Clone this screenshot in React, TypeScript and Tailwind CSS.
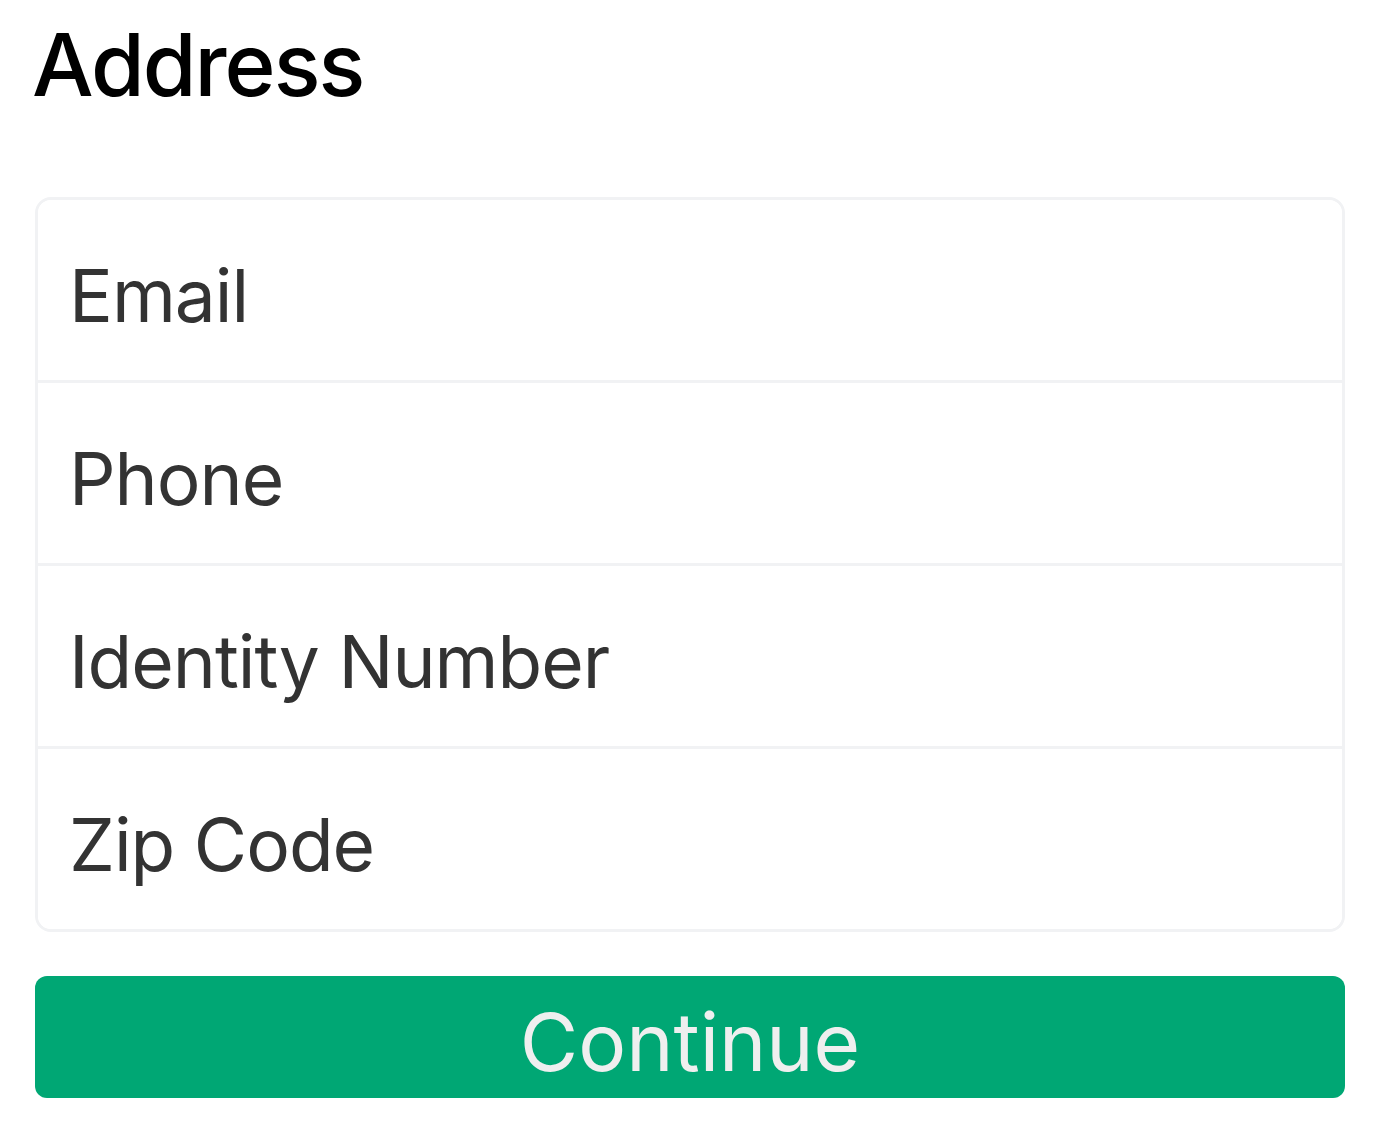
export default function App() {
  const fields = ["Email", "Phone", "Identity Number", "Zip Code"];
  return (
    <div className="min-h-screen bg-white px-[35px] pt-[21px] font-['Inter',sans-serif]">
      <h1 className="-ml-[3px] text-[87px] font-medium leading-none text-black tracking-[-2px]">Address</h1>
      <div className="mt-[89px] w-[1310px] rounded-[16px] border-[3px] border-[#f1f2f4] overflow-hidden">
        {fields.map((f, i) => (
          <div
            key={f}
            className={
              "flex h-[180px] items-center pl-[31px] pt-[10px] bg-white " +
              (i < fields.length - 1 ? "border-b-[3px] border-[#f1f2f4] h-[183px]" : "")
            }
          >
            <span className="text-[73px] leading-none text-[#333333] tracking-[-1px]">{f}</span>
          </div>
        ))}
      </div>
      <button className="mt-[44px] flex h-[122px] w-[1310px] items-center justify-center rounded-[12px] bg-[#00a774] pt-[10px]">
        <span className="text-[80px] leading-none text-[#efefef]">Continue</span>
      </button>
    </div>
  );
}
